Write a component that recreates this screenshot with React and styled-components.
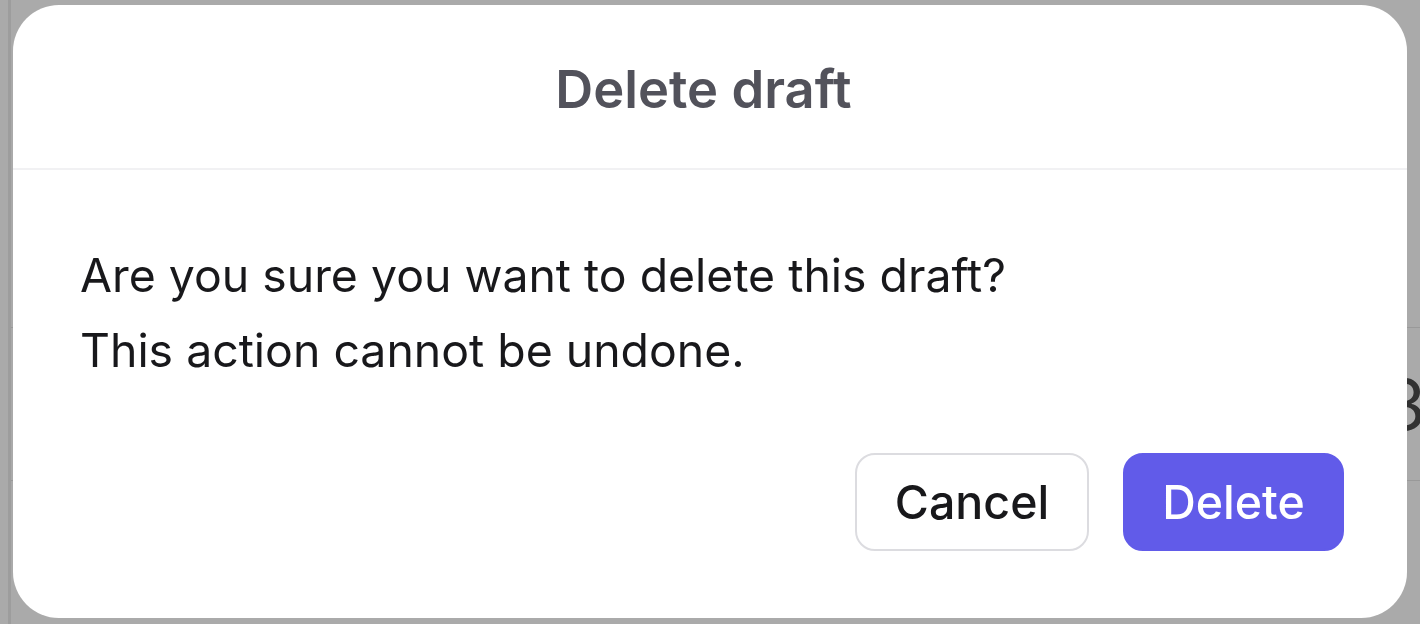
import React from "react";
import styled, { createGlobalStyle } from "styled-components";

const GlobalStyle = createGlobalStyle`
  html, body {
    margin: 0;
    padding: 0;
    height: 100%;
    background: #ffffff;
    font-family: Inter, "Liberation Sans", sans-serif;
  }
  #root {
    height: 100%;
  }
`;

const Page = styled.div`
  display: flex;
  height: 100vh;
  overflow: hidden;
`;

const Sidebar = styled.div`
  width: 8px;
  flex-shrink: 0;
  border-right: 3px solid #ececec;
`;

const Main = styled.div`
  flex: 1;
  padding-top: 327px;
  overflow: hidden;
`;

const Row = styled.div`
  display: flex;
  justify-content: flex-end;
  align-items: center;
  height: 152px;
  border-top: 1px solid #e6e6e6;
  border-bottom: 1px solid #e6e6e6;
`;

const Cell = styled.span`
  font-size: 70px;
  color: #4a4a4a;
  margin-right: -6px;
`;

const Overlay = styled.div`
  position: fixed;
  inset: 0;
  display: flex;
  padding: 5px 13px 6px 13px;
  background: rgba(0, 0, 0, 0.335);
`;

const Dialog = styled.div`
  flex: 1;
  display: flex;
  flex-direction: column;
  background: #ffffff;
  border-radius: 46px;
  overflow: hidden;
`;

const Header = styled.div`
  height: 163px;
  display: flex;
  align-items: center;
  justify-content: center;
  padding-right: 13px;
  border-bottom: 2px solid #f1f1f3;
`;

const Title = styled.h2`
  margin: 4px 0 0;
  font-size: 52.5px;
  font-weight: 600;
  color: #52525b;
`;

const Body = styled.div`
  flex: 1;
  display: flex;
  flex-direction: column;
  padding: 68px 63px 67px 67px;
`;

const Message = styled.p`
  margin: 0;
  font-size: 46.4px;
  line-height: 75px;
  color: #18181b;
`;

const Actions = styled.div`
  margin-top: auto;
  display: flex;
  justify-content: flex-end;
  gap: 34px;
`;

const Button = styled.button`
  height: 98px;
  width: ${({ $primary }) => ($primary ? "221px" : "234px")};
  padding: 0;
  border-radius: 20px;
  font-family: inherit;
  font-size: 46.5px;
  font-weight: 500;
  border: 2px solid ${({ $primary }) => ($primary ? "#615be9" : "#dcdce0")};
  background: ${({ $primary }) => ($primary ? "#615be9" : "#ffffff")};
  color: ${({ $primary }) => ($primary ? "#ffffff" : "#18181b")};
  cursor: pointer;
`;

export default function App() {
  return (
    <>
      <GlobalStyle />
      <Page>
        <Sidebar />
        <Main>
          <Row>
            <Cell>3</Cell>
          </Row>
        </Main>
      </Page>
      <Overlay>
        <Dialog>
          <Header>
            <Title>Delete draft</Title>
          </Header>
          <Body>
            <Message>Are you sure you want to delete this draft?</Message>
            <Message>This action cannot be undone.</Message>
            <Actions>
              <Button>Cancel</Button>
              <Button $primary>Delete</Button>
            </Actions>
          </Body>
        </Dialog>
      </Overlay>
    </>
  );
}
